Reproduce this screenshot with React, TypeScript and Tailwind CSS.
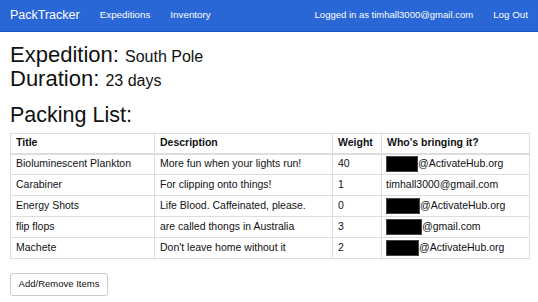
import React from "react";

const rows = [
  { title: "Bioluminescent Plankton", desc: "More fun when your lights run!", weight: "40", who: "@ActivateHub.org", redact: 32 },
  { title: "Carabiner", desc: "For clipping onto things!", weight: "1", who: "timhall3000@gmail.com", redact: 0 },
  { title: "Energy Shots", desc: "Life Blood. Caffeinated, please.", weight: "0", who: "@ActivateHub.org", redact: 34 },
  { title: "flip flops", desc: "are called thongs in Australia", weight: "3", who: "@gmail.com", redact: 36 },
  { title: "Machete", desc: "Don't leave home without it", weight: "2", who: "@ActivateHub.org", redact: 33 },
];

export default function App() {
  return (
    <div className="w-[538px] h-[302px] bg-white text-[#111] overflow-hidden" style={{ fontFamily: '"Liberation Sans", Arial, sans-serif' }}>
      <nav className="h-[32px] bg-[#2a67d6] border-b border-[#1d55bd] flex items-center px-[10px] text-white">
        <span className="text-[12.5px] mr-[20px]">PackTracker</span>
        <span className="text-[9.8px] mr-[20px]">Expeditions</span>
        <span className="text-[9.8px]">Inventory</span>
        <span className="text-[9.5px] ml-auto mr-[20px]">Logged in as timhall3000@gmail.com</span>
        <span className="text-[9.8px]">Log Out</span>
      </nav>
      <div className="px-[10px]">
        <div className="mt-[11px] text-[22px] leading-[24px]">
          <div className="h-[24px]">Expedition: <span className="text-[16px] leading-[24px]">South Pole</span></div>
          <div className="h-[24px]">Duration: <span className="text-[16px] leading-[24px]">23 days</span></div>
        </div>
        <div className="mt-[12px] h-[24px] text-[21.5px] leading-[24px]">Packing List:</div>
        <table className="mt-[6px] w-[520px] table-fixed border-collapse text-[10.5px] border border-[#ddd]">
          <colgroup>
            <col className="w-[144px]" />
            <col className="w-[178px]" />
            <col className="w-[49px]" />
            <col />
          </colgroup>
          <thead>
            <tr className="h-[20px]">
              <th className="text-left font-bold border border-[#ddd] border-b-2 px-[5px]">Title</th>
              <th className="text-left font-bold border border-[#ddd] border-b-2 px-[5px]">Description</th>
              <th className="text-left font-bold border border-[#ddd] border-b-2 px-[5px]">Weight</th>
              <th className="text-left font-bold border border-[#ddd] border-b-2 px-[5px]">Who's bringing it?</th>
            </tr>
          </thead>
          <tbody>
            {rows.map((r) => (
              <tr key={r.title} className="h-[21px]">
                <td className="border border-[#ddd] px-[5px]">{r.title}</td>
                <td className="border border-[#ddd] px-[5px]">{r.desc}</td>
                <td className="border border-[#ddd] px-[5px]">{r.weight}</td>
                <td className="border border-[#ddd] px-[4px]">
                  <div className="flex items-center">
                    {r.redact > 0 && (
                      <span className="inline-block h-[16px] bg-black border border-[#444]" style={{ width: r.redact }} />
                    )}
                    <span>{r.who}</span>
                  </div>
                </td>
              </tr>
            ))}
          </tbody>
        </table>
        <button className="mt-[14px] h-[23px] w-[98px] text-[9.5px] border border-[#ccc] rounded-[3px] bg-white">Add/Remove Items</button>
      </div>
    </div>
  );
}
